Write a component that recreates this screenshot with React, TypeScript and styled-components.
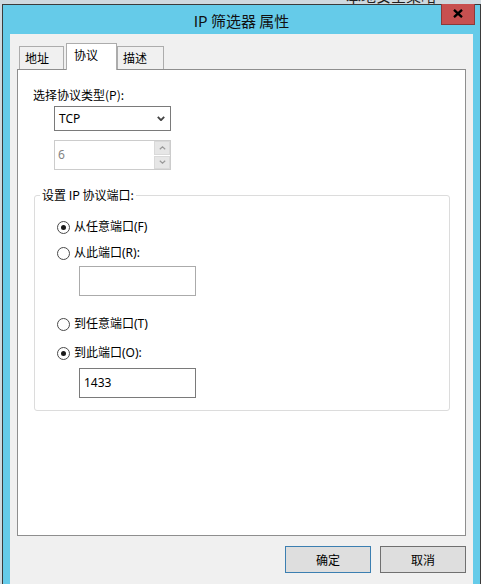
import styled, { createGlobalStyle } from "styled-components";

const GlobalStyle = createGlobalStyle`
  html, body {
    margin: 0;
    padding: 0;
  }
  body {
    background: #cfd9df;
    font-family: "Noto Sans", "Noto Sans CJK SC", sans-serif;
    font-size: 12px;
    color: #000;
    overflow: hidden;
  }
`;

const Desktop = styled.div`
  position: relative;
  width: 481px;
  height: 584px;
  box-sizing: border-box;
  padding: 4px 0 0 2px;
  overflow: hidden;
`;

// title of the window that sits behind the dialog, only its bottom edge shows
const BehindTitle = styled.div`
  position: absolute;
  top: -12px;
  left: 346px;
  font-family: "Noto Sans CJK SC", sans-serif;
  font-size: 15px;
  line-height: 16px;
  color: #1e1e1e;
`;

const Window = styled.div`
  position: relative;
  width: 479px;
  height: 600px;
  box-sizing: border-box;
  border: 1px solid #3b3b3b;
  background: #65cbe9;
  padding: 0 7px;
  display: flex;
  flex-direction: column;
`;

const TitleBar = styled.div`
  height: 29px;
  line-height: 29px;
  padding-top: 1px;
  box-sizing: border-box;
  text-align: center;
  font-family: "Noto Sans CJK SC", sans-serif;
  font-size: 15px;
  color: #111;
`;

const CloseButton = styled.div`
  position: absolute;
  top: -1px;
  right: 5px;
  width: 34px;
  height: 21px;
  box-sizing: border-box;
  background: #c75050;
  border: 1px solid #8a3a3a;
  border-top: none;
  display: flex;
  align-items: center;
  justify-content: center;
  padding-bottom: 1px;
`;

const Client = styled.div`
  flex: 1;
  background: #f0f0f0;
  padding: 9px 7px 0;
  display: flex;
  flex-direction: column;
`;

const TabStrip = styled.div`
  position: relative;
  z-index: 1;
  display: flex;
  align-items: flex-start;
  height: 27px;
  padding-left: 2px;
  margin-bottom: -1px;
`;

const Tab = styled.div<{ $active?: boolean; $w: number; $ml?: number }>`
  width: ${({ $w }) => $w}px;
  margin-left: ${({ $ml = 0 }) => $ml}px;
  height: ${({ $active }) => ($active ? 27 : 23)}px;
  margin-top: ${({ $active }) => ($active ? 0 : 3)}px;
  box-sizing: border-box;
  border: 1px solid #acacac;
  border-bottom: none;
  background: ${({ $active }) => ($active ? "#ffffff" : "#f0f0f0")};
  padding-left: ${({ $active }) => ($active ? 7 : 5)}px;
  padding-top: ${({ $active }) => ($active ? 3 : 3)}px;
  font-family: "Noto Sans CJK SC", sans-serif;
  line-height: 16px;
`;

const Panel = styled.div`
  height: 467px;
  box-sizing: border-box;
  background: #ffffff;
  border: 1px solid #8e8e8e;
  padding-top: 17px;
  display: flex;
  flex-direction: column;
  align-items: flex-start;
`;

const Label = styled.div`
  margin-left: 15px;
  line-height: 16px;
  font-family: "Noto Sans CJK SC", sans-serif;
`;

const Select = styled.div`
  margin: 3px 0 0 36px;
  width: 117px;
  height: 25px;
  box-sizing: border-box;
  border: 1px solid #7a7a7a;
  display: flex;
  align-items: center;
  justify-content: space-between;
  padding: 0 5px 0 4px;
  font-size: 12px;
`;

const SpinBox = styled.div`
  margin: 9px 0 0 36px;
  width: 117px;
  height: 30px;
  box-sizing: border-box;
  border: 1px solid #cccccc;
  display: flex;
`;

const SpinValue = styled.div`
  flex: 1;
  padding: 6px 0 0 3px;
  color: #838383;
  line-height: 16px;
`;

const SpinButtons = styled.div`
  width: 16px;
  display: flex;
  flex-direction: column;
  gap: 1px;
  background: #ffffff;
  border-left: 1px solid #ffffff;
`;

const SpinButton = styled.div`
  flex: 1;
  background: #e6e6e6;
  border: 1px solid #d9d9d9;
  display: flex;
  align-items: center;
  justify-content: center;
`;

const GroupBox = styled.fieldset`
  margin: 18px 0 0 16px;
  width: 416px;
  box-sizing: border-box;
  border: 1px solid #dcdcdc;
  border-radius: 3px;
  padding: 0 0 12px 0;
  min-inline-size: 0;
`;

const Legend = styled.legend`
  margin-left: 5px;
  padding: 0 2px;
  line-height: 14px;
  font-family: "Noto Sans CJK SC", sans-serif;
`;

const RadioRow = styled.div<{ $mt: number }>`
  display: flex;
  align-items: center;
  gap: 4px;
  height: 16px;
  margin: ${({ $mt }) => $mt}px 0 0 22px;
  font-family: "Noto Sans", "Noto Sans CJK SC", sans-serif;
  line-height: 16px;
`;

const RadioCircle = styled.span<{ $checked?: boolean }>`
  width: 13px;
  height: 13px;
  box-sizing: border-box;
  border-radius: 50%;
  border: 1px solid #4a4a4a;
  background: #ffffff;
  display: flex;
  align-items: center;
  justify-content: center;
  &::after {
    content: "";
    width: 5px;
    height: 5px;
    border-radius: 50%;
    background: ${({ $checked }) => ($checked ? "#1a1a1a" : "transparent")};
  }
`;

const PortInput = styled.div<{ $mt: number; $enabled?: boolean }>`
  margin: ${({ $mt }) => $mt}px 0 0 44px;
  width: 117px;
  height: 30px;
  box-sizing: border-box;
  border: 1px solid ${({ $enabled }) => ($enabled ? "#7a7a7a" : "#ababab")};
  padding: 6px 0 0 4px;
  line-height: 16px;
`;

const ButtonRow = styled.div`
  display: flex;
  justify-content: flex-end;
  gap: 9px;
  margin-top: 10px;
`;

const DialogButton = styled.div<{ $default?: boolean }>`
  width: 86px;
  height: 27px;
  box-sizing: border-box;
  border: 1px solid ${({ $default }) => ($default ? "#3c7fb1" : "#707070")};
  background: #dedede;
  display: flex;
  align-items: center;
  justify-content: center;
  font-family: "Noto Sans CJK SC", sans-serif;
`;

const Chevron = ({ up, color, w, h, sw }: { up?: boolean; color: string; w: number; h: number; sw: number }) => (
  <svg width={w} height={h} viewBox={`0 0 ${w} ${h}`}>
    <polyline
      points={up ? `0.8,${h - 0.8} ${w / 2},0.8 ${w - 0.8},${h - 0.8}` : `0.8,0.8 ${w / 2},${h - 0.8} ${w - 0.8},0.8`}
      fill="none"
      stroke={color}
      strokeWidth={sw}
    />
  </svg>
);

export default function App() {
  return (
    <>
      <GlobalStyle />
      <Desktop>
        <BehindTitle>本地安全策略</BehindTitle>
        <Window>
          <TitleBar>IP 筛选器 属性</TitleBar>
          <CloseButton>
            <svg width="10" height="9" viewBox="0 0 10 9">
              <path d="M1 0.8 L9 8.2 M9 0.8 L1 8.2" stroke="#000" strokeWidth="2.3" />
            </svg>
          </CloseButton>
          <Client>
            <TabStrip>
              <Tab $w={45}>地址</Tab>
              <Tab $w={51} $ml={2} $active>
                协议
              </Tab>
              <Tab $w={47}>描述</Tab>
            </TabStrip>
            <Panel>
              <Label>选择协议类型(P):</Label>
              <Select>
                <span>TCP</span>
                <Chevron color="#444" w={8} h={5} sw={1.8} />
              </Select>
              <SpinBox>
                <SpinValue>6</SpinValue>
                <SpinButtons>
                  <SpinButton>
                    <Chevron up color="#999" w={7} h={4} sw={1.2} />
                  </SpinButton>
                  <SpinButton>
                    <Chevron color="#999" w={7} h={4} sw={1.2} />
                  </SpinButton>
                </SpinButtons>
              </SpinBox>
              <GroupBox>
                <Legend>设置 IP 协议端口:</Legend>
                <RadioRow $mt={17}>
                  <RadioCircle $checked />
                  从任意端口(F)
                </RadioRow>
                <RadioRow $mt={10}>
                  <RadioCircle />
                  从此端口(R):
                </RadioRow>
                <PortInput $mt={5} />
                <RadioRow $mt={20}>
                  <RadioCircle />
                  到任意端口(T)
                </RadioRow>
                <RadioRow $mt={13}>
                  <RadioCircle $checked />
                  到此端口(O):
                </RadioRow>
                <PortInput $mt={7} $enabled>
                  1433
                </PortInput>
              </GroupBox>
            </Panel>
            <ButtonRow>
              <DialogButton $default>确定</DialogButton>
              <DialogButton>取消</DialogButton>
            </ButtonRow>
          </Client>
        </Window>
      </Desktop>
    </>
  );
}
